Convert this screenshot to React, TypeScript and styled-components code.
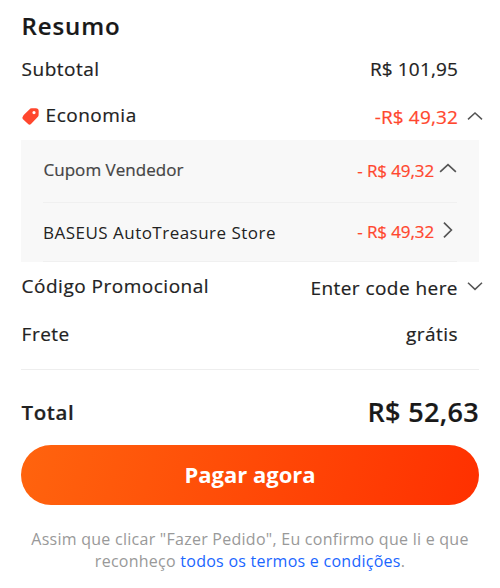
import React from "react";
import styled, { createGlobalStyle } from "styled-components";

type Direction = "up" | "down" | "right";

const chevronPaths: Record<Direction, string> = {
  up: "M1 11.4 L8 5 L15 11.4",
  down: "M1 4.8 L8 11.4 L15 4.8",
  right: "M4.4 1.4 L11 8 L4.4 14.6",
};

const Chevron: React.FC<{ direction: Direction; size?: number }> = ({ direction, size = 16 }) => (
  <svg width={size} height={size} viewBox="0 0 16 16" fill="none" stroke="#555" strokeWidth="1.5">
    <path d={chevronPaths[direction]} />
  </svg>
);

const TagIcon: React.FC = () => (
  <svg width="17" height="17" viewBox="0 0 17 17">
    <path
      fill="#ff472e"
      fillRule="evenodd"
      d="M8.4 .6 Q9 .2 9.8 .2 L13.8 .2 Q16.6 .3 16.7 3 L16.6 7 Q16.6 8 15.9 8.8 L9 16 Q7.6 17.3 6.1 16.1 L1 11.3 Q-.2 9.9 .9 8.5 Q1.2 7.4 2.2 6.4 Z M12 3 A1.6 1.6 0 1 0 12 6.2 A1.6 1.6 0 1 0 12 3 Z"
    />
  </svg>
);

const App: React.FC = () => (
  <>
    <GlobalStyle />
    <Summary>
      <Title>Resumo</Title>
      <Row $height={47}>
        <Label>Subtotal</Label>
        <Value $spacing={0.15}>R$ 101,95</Value>
        <Slot />
      </Row>
      <Row $height={48}>
        <Label $lift={2}>
          <TagIcon />
          Economia
        </Label>
        <Value $shift={1} $spacing={0.15} $red>
          -R$ 49,32
        </Value>
        <Slot>
          <Chevron direction="up" />
        </Slot>
      </Row>
      <Savings>
        <SavingsRow $height={63} $lift={4}>
          <SellerLabel>Cupom Vendedor</SellerLabel>
          <SavingsValue $shift={2}>- R$ 49,32</SavingsValue>
          <Chevron direction="up" size={18} />
        </SavingsRow>
        <SavingsRow $height={59} $lift={2}>
          <StoreName>BASEUS AutoTreasure Store</StoreName>
          <SavingsValue>- R$ 49,32</SavingsValue>
          <Chevron direction="right" size={18} />
        </SavingsRow>
      </Savings>
      <Row $height={48}>
        <Label>Código Promocional</Label>
        <Value $shift={3}>Enter code here</Value>
        <Slot>
          <Chevron direction="down" />
        </Slot>
      </Row>
      <Row $height={48}>
        <Label>Frete</Label>
        <Value>grátis</Value>
        <Slot />
      </Row>
      <TotalRow>
        <TotalLabel>Total</TotalLabel>
        <TotalValue>R$ 52,63</TotalValue>
      </TotalRow>
      <PayButton>Pagar agora</PayButton>
      <Terms>
        Assim que clicar "Fazer Pedido", Eu confirmo que li e que
        <br />
        reconheço <TermsLink href="#">todos os termos e condições</TermsLink>.
      </Terms>
    </Summary>
  </>
);

const GlobalStyle = createGlobalStyle`
  body {
    margin: 0;
    background: #fff;
    font-family: "Open Sans", "Noto Sans", sans-serif;
    color: #222;
  }
`;

const Summary = styled.div`
  box-sizing: border-box;
  width: 500px;
  height: 588px;
  padding: 6px 21px 0;
  overflow: hidden;
`;

const Title = styled.h1`
  margin: 0;
  height: 39px;
  padding-left: 0.5px;
  line-height: 39px;
  font-size: 24px;
  font-weight: 600;
  letter-spacing: 0.9px;
  color: #191919;
  -webkit-text-stroke: 0.2px;
`;

const Row = styled.div<{ $height: number }>`
  display: flex;
  align-items: center;
  height: ${({ $height }) => $height}px;
  margin-right: -4px;
`;

const Label = styled.span<{ $lift?: number }>`
  display: flex;
  align-items: center;
  gap: 7px;
  flex: 1;
  padding-left: 0.6px;
  padding-bottom: ${({ $lift = 0 }) => $lift}px;
  font-size: 19px;
  letter-spacing: 0.5px;
  -webkit-text-stroke: 0.2px;

  svg {
    margin-top: 2px;
  }
`;

const Value = styled.span<{ $red?: boolean; $shift?: number; $spacing?: number }>`
  padding-top: ${({ $shift = 0 }) => $shift}px;
  font-size: 19px;
  letter-spacing: ${({ $spacing = 0.45 }) => $spacing}px;
  color: ${({ $red }) => ($red ? "#ff472e" : "#222")};
  -webkit-text-stroke: 0.2px;
`;

const Slot = styled.span`
  display: flex;
  justify-content: flex-end;
  width: 25px;
`;

const Savings = styled.div`
  height: 122px;
  padding: 0 22px;
  background: #f8f8f8;
`;

const SavingsRow = styled.div<{ $height: number; $lift: number }>`
  box-sizing: border-box;
  display: flex;
  align-items: center;
  height: ${({ $height }) => $height}px;
  padding-bottom: ${({ $lift }) => $lift}px;
  border-bottom: 1px solid #f0f0f0;

  svg {
    margin: 0 0 2px 5px;
  }
`;

const SellerLabel = styled.span`
  flex: 1;
  padding-left: 0.5px;
  font-size: 17px;
  letter-spacing: 0.03px;
  color: #444;
  -webkit-text-stroke: 0.2px;
`;

const StoreName = styled.span`
  flex: 1;
  padding-top: 2px;
  font-size: 17px;
  letter-spacing: 0.48px;
`;

const SavingsValue = styled.span<{ $shift?: number }>`
  padding-top: ${({ $shift = 0 }) => $shift}px;
  font-size: 17px;
  letter-spacing: -0.1px;
  color: #ff472e;
  -webkit-text-stroke: 0.2px;
`;

const TotalRow = styled.div`
  box-sizing: border-box;
  display: flex;
  align-items: center;
  justify-content: space-between;
  height: 76px;
  margin-top: 11px;
  padding-top: 9px;
  border-top: 1px solid #eee;
`;

const TotalLabel = styled.span`
  padding-left: 0.5px;
  font-size: 20.5px;
  font-weight: 600;
  letter-spacing: 0.6px;
  -webkit-text-stroke: 0.2px;
`;

const TotalValue = styled.span`
  padding-bottom: 1px;
  font-size: 27px;
  font-weight: 600;
  letter-spacing: 0.35px;
  color: #191919;
  -webkit-text-stroke: 0.2px;
`;

const PayButton = styled.button`
  display: block;
  width: 458px;
  height: 60px;
  padding: 0 0 2px;
  border: 0;
  border-radius: 30px;
  background: linear-gradient(105deg, #ff640e 0%, #ff3000 100%);
  color: #fff;
  font-family: inherit;
  font-size: 22px;
  font-weight: 700;
`;

const Terms = styled.p`
  margin: 23px -11px 0;
  font-size: 16px;
  line-height: 22px;
  letter-spacing: 0.26px;
  text-align: center;
  white-space: nowrap;
  color: #999;
`;

const TermsLink = styled.a`
  color: #1a66ff;
  text-decoration: none;
`;

export default App;
